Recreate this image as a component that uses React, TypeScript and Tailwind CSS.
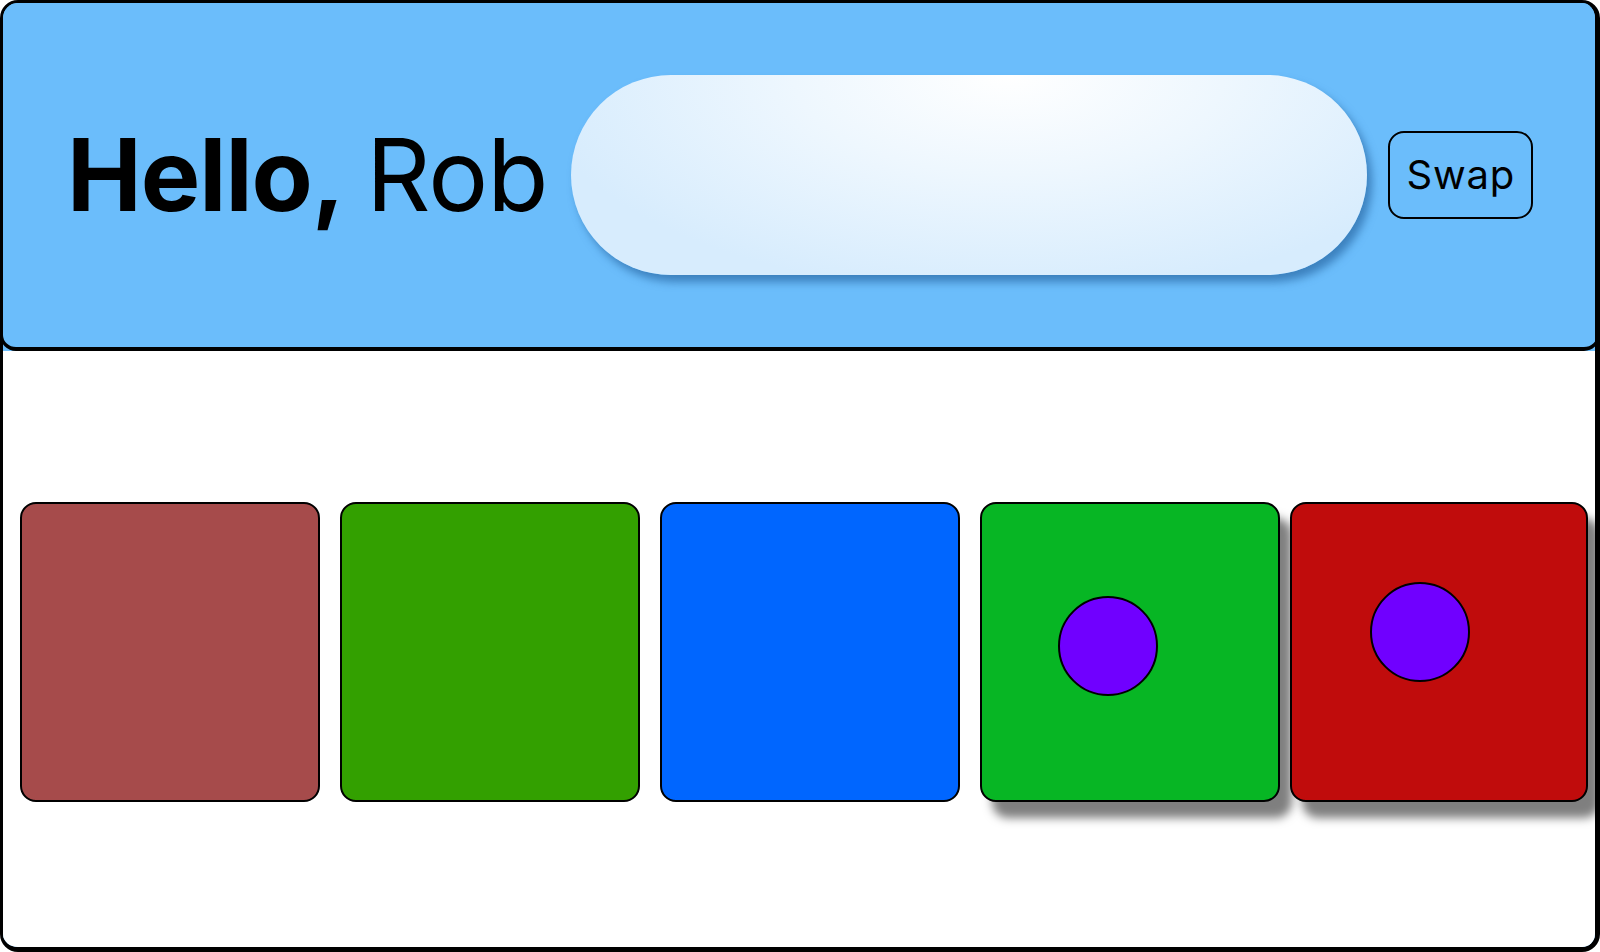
import React from "react";

type Card = { color: string; lifted?: boolean; dot?: { x: number; y: number } };

const cards: Card[] = [
  { color: "bg-[#a64b4b]" },
  { color: "bg-[#33a000]" },
  { color: "bg-[#0066ff]" },
  { color: "bg-[#07b624]", lifted: true, dot: { x: 76, y: 92 } },
  { color: "bg-[#c00c0c]", lifted: true, dot: { x: 78, y: 78 } },
];

export default function App() {
  return (
    <div
      className="w-full h-[952px] border-[3px] border-r-[5px] border-b-[5px] border-black rounded-[18px] bg-[#6bbdfb] overflow-hidden flex flex-col"
      style={{ fontFamily: "Inter, 'Noto Sans', sans-serif" }}
    >
      <header className="-mt-[3px] -ml-[3px] -mr-[5px] h-[351px] shrink-0 border-[3px] border-b-4 border-black rounded-[16px] bg-[#6bbdfb] flex items-center gap-6 px-16">
        <h1 className="text-[100px] leading-none text-black whitespace-nowrap tracking-[-0.01em] [word-spacing:-5px]">
          <span className="font-bold">Hello,</span>
          <span className="font-normal"> Rob</span>
        </h1>
        <div className="flex-1 h-[200px] rounded-full bg-[radial-gradient(ellipse_60%_110%_at_55%_0%,#ffffff_0%,#eef7fe_45%,#d7ecfd_100%)] shadow-[5px_7px_8px_rgba(30,90,150,0.6)]" />
        <button className="shrink-0 -ml-[3px] border-2 border-black rounded-[16px] px-4 py-3 text-[40px] leading-[60px] text-black font-normal tracking-[0.02em]">
          Swap
        </button>
      </header>
      <main className="flex-1 bg-white flex items-center pl-[17px] pt-[6px] gap-5">
        {cards.map((c, i) => (
          <div
            key={i}
            className={`relative shrink-0 h-[300px] border-2 border-black rounded-[16px] ${c.color} ${
              i === 4 ? "w-[298px] -ml-[10px]" : "w-[300px]"
            } ${c.lifted ? "shadow-[12px_16px_10px_rgba(0,0,0,0.5)]" : ""}`}
          >
            {c.dot && (
              <div
                className="absolute w-[100px] h-[100px] rounded-full border-2 border-black bg-[#7000ff]"
                style={{ left: c.dot.x, top: c.dot.y }}
              />
            )}
          </div>
        ))}
      </main>
    </div>
  );
}
